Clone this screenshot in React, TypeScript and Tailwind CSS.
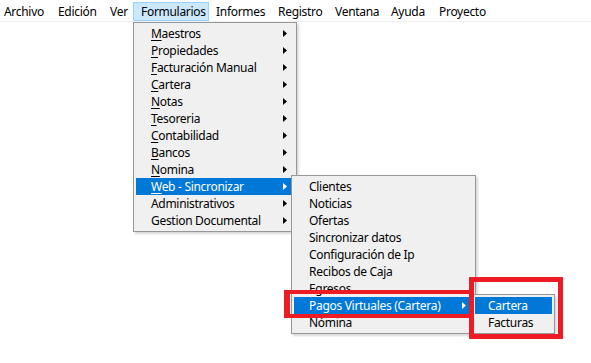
import React from "react";

const Arrow = ({ white }: { white?: boolean }) => (
  <svg width="4" height="7" viewBox="0 0 4 7" className="block">
    <path d="M0 0 L4 3.5 L0 7 Z" fill={white ? "#ffffff" : "#000000"} />
  </svg>
);

type Item = { label: string; u?: boolean; arrow?: boolean; hi?: boolean };

const Label = ({ label, u }: { label: string; u?: boolean }) =>
  u ? (
    <span>
      <span className="underline underline-offset-2">{label[0]}</span>
      {label.slice(1)}
    </span>
  ) : (
    <span>{label}</span>
  );

const Row = ({ item, pl }: { item: Item; pl: string }) => (
  <div
    className={`flex h-[17px] items-center justify-between pr-[7px] ${pl} ${
      item.hi ? "bg-[#0078d7] text-white" : "text-black"
    }`}
  >
    <Label label={item.label} u={item.u} />
    {item.arrow ? <Arrow white={item.hi} /> : null}
  </div>
);

const menu1: Item[] = [
  { label: "Maestros", u: true, arrow: true },
  { label: "Propiedades", u: true, arrow: true },
  { label: "Facturación Manual", u: true, arrow: true },
  { label: "Cartera", u: true, arrow: true },
  { label: "Notas", u: true, arrow: true },
  { label: "Tesoreria", u: true, arrow: true },
  { label: "Contabilidad", u: true, arrow: true },
  { label: "Bancos", u: true, arrow: true },
  { label: "Nomina", u: true, arrow: true },
  { label: "Web - Sincronizar", u: true, arrow: true, hi: true },
  { label: "Administrativos", arrow: true },
  { label: "Gestion Documental", arrow: true },
];

const menu2: Item[] = [
  { label: "Clientes" },
  { label: "Noticias" },
  { label: "Ofertas" },
  { label: "Sincronizar datos" },
  { label: "Configuración de Ip" },
  { label: "Recibos de Caja" },
  { label: "Egresos" },
  { label: "Pagos Virtuales (Cartera)", arrow: true, hi: true },
  { label: "Nómina" },
];

const menu3: Item[] = [{ label: "Cartera", hi: true }, { label: "Facturas" }];

const bar = [
  { t: "Archivo", w: "w-[51px]", pl: "pl-[4px]" },
  { t: "Edición", w: "w-[52px]", pl: "pl-[7px]" },
  { t: "Ver", w: "w-[30px]", pl: "pl-[7px]" },
  { t: "Formularios", w: "w-[76px]", pl: "pl-[7px]", hi: true },
  { t: "Informes", w: "w-[62px]", pl: "pl-[7px]" },
  { t: "Registro", w: "w-[57px]", pl: "pl-[7px]" },
  { t: "Ventana", w: "w-[56px]", pl: "pl-[7px]" },
  { t: "Ayuda", w: "w-[48px]", pl: "pl-[7px]" },
  { t: "Proyecto", w: "w-[70px]", pl: "pl-[7px]" },
];

export default function App() {
  return (
    <div
      className="relative h-[363px] w-[591px] overflow-hidden bg-white text-[12px] tracking-[-0.3px] text-black"
      style={{ fontFamily: '"Noto Sans", "Open Sans", sans-serif' }}
    >
      <div className="flex h-[21px] items-end bg-white">
        {bar.map((b) => (
          <div
            key={b.t}
            className={`flex h-[19px] shrink-0 items-center ${b.w} ${b.pl} ${
              b.hi ? "border border-[#99d1ff] bg-[#cce8ff] pl-[6px]" : ""
            }`}
          >
            {b.t}
          </div>
        ))}
      </div>
      <div className="h-px bg-[#f0f0f0]" />

      {/* Dropdown 1 */}
      <div className="absolute left-[133px] top-[22px] w-[164px] border border-[#979797] bg-[#f0f0f0] px-[2px] py-[2px] shadow-[2px_2px_2px_rgba(0,0,0,0.15)]">
        {menu1.map((it) => (
          <Row key={it.label} item={it} pl="pl-[15px]" />
        ))}
      </div>

      {/* Submenu 2 */}
      <div className="absolute left-[291px] top-[175px] w-[185px] border border-[#979797] bg-[#f0f0f0] px-[2px] py-[2px] shadow-[2px_2px_2px_rgba(0,0,0,0.15)]">
        {menu2.map((it) => (
          <Row key={it.label} item={it} pl="pl-[15px]" />
        ))}
      </div>

      {/* Submenu 3 */}
      <div className="absolute left-[472px] top-[294px] w-[83px] border border-[#979797] bg-[#f0f0f0] px-[2px] py-[2px] shadow-[2px_2px_2px_rgba(0,0,0,0.15)]">
        {menu3.map((it) => (
          <Row key={it.label} item={it} pl="pl-[13px]" />
        ))}
      </div>

      {/* Red annotation boxes */}
      <div className="absolute left-[284px] top-[290px] h-[28px] w-[190px] border-y-4 border-l-[6px] border-[#ed1c24]" />
      <div className="absolute left-[469px] top-[277px] h-[62px] w-[94px] border-[5px] border-[#ed1c24]" />
    </div>
  );
}
